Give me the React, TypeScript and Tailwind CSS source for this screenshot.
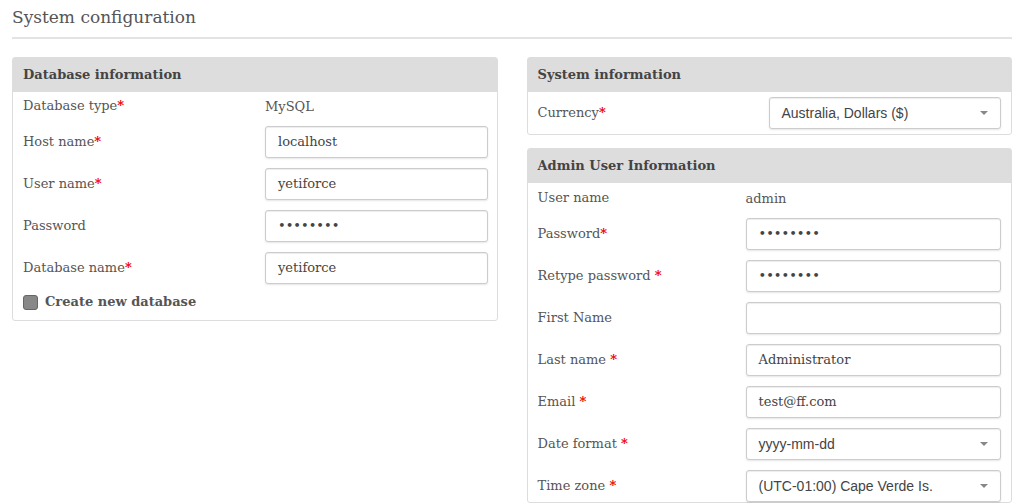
import React from "react";

const serif = { fontFamily: '"DejaVu Serif", serif' };
const sansF = { fontFamily: '"Liberation Sans", Arial, sans-serif', fontSize: "14px" };
const Star = () => <span className="text-[#e00] font-bold">*</span>;

function Inp({ v, sel }: { v: string; sel?: boolean }) {
  return (
    <div
      className="h-[32px] border border-[#ccc] rounded-[3px] shadow-[inset_0_1px_1px_rgba(0,0,0,0.075),0_1px_2px_rgba(0,0,0,0.1)] bg-white flex items-center px-3 text-[13px] text-[#444]"
      style={sel ? sansF : undefined}
    >
      <span className="flex-1 whitespace-nowrap">{v}</span>
      {sel && <span className="w-0 h-0 border-l-[4px] border-r-[4px] border-t-[4px] border-l-transparent border-r-transparent border-t-[#888]" />}
    </div>
  );
}

function Row({ label, req, sp, children, lw, h }: any) {
  return (
    <div className={`flex items-center ${h || ""}`}>
      <div className="text-[13px] text-[#555]" style={{ width: lw }}>
        {label}
        {req && (sp ? " " : "")}
        {req && <Star />}
      </div>
      <div className="flex-1">{children}</div>
    </div>
  );
}

function Panel({ title, children, cls }: any) {
  return (
    <div className={`border border-[#ddd] rounded-[3px] bg-white ${cls || ""}`}>
      <div className="h-[34px] bg-[#ddd] flex items-center px-[10px] text-[13px] font-bold text-[#444]">{title}</div>
      {children}
    </div>
  );
}

const Dots = "••••••••";

export default function App() {
  return (
    <div className="w-[1024px] h-[503px] bg-white overflow-hidden px-3" style={serif}>
      <div className="h-[39px] pt-[5px] text-[17px] text-[#555] border-b-2 border-[#e3e3e3]">System configuration</div>
      <div className="flex items-start gap-[29px] mt-[18px]">
        <Panel title="Database information" cls="w-[486px]">
          <div className="pl-[10px] pr-[9px] pb-[9px]">
            <Row label="Database type" req lw={242} h="h-[26px] mt-[1px]"><span className="text-[13px] text-[#555]">MySQL</span></Row>
            <div className="flex flex-col gap-[10px] mt-[7px]">
              <Row label="Host name" req lw={242}><Inp v="localhost" /></Row>
              <Row label="User name" req lw={242}><Inp v="yetiforce" /></Row>
              <Row label="Password" lw={242}><Inp v={Dots} /></Row>
              <Row label="Database name" req lw={242}><Inp v="yetiforce" /></Row>
            </div>
            <div className="flex items-center gap-[7px] mt-[9px] h-[18px]">
              <span className="w-[15px] h-[15px] rounded-[3px] bg-[#888] border border-[#666]" />
              <span className="text-[13px] font-bold text-[#555]">Create new database</span>
            </div>
          </div>
        </Panel>
        <div className="w-[486px] flex flex-col gap-[13px]">
          <Panel title="System information">
            <div className="px-[10px] py-[5px]">
              <Row label="Currency" req lw={231}><Inp v="Australia, Dollars ($)" sel /></Row>
            </div>
          </Panel>
          <Panel title="Admin User Information">
            <div className="px-[10px]">
              <Row label="User name" lw={208} h="h-[28px] mt-[1px]"><span className="text-[13px] text-[#555]">admin</span></Row>
              <div className="flex flex-col gap-[10px] mt-[6px]">
                <Row label="Password" req lw={208}><Inp v={Dots} /></Row>
                <Row label="Retype password" req sp lw={208}><Inp v={Dots} /></Row>
                <Row label="First Name" lw={208}><Inp v="" /></Row>
                <Row label="Last name" req sp lw={208}><Inp v="Administrator" /></Row>
                <Row label="Email" req sp lw={208}><Inp v="test@ff.com" /></Row>
                <Row label="Date format" req sp lw={208}><Inp v="yyyy-mm-dd" sel /></Row>
                <Row label="Time zone" req sp lw={208}><Inp v="(UTC-01:00) Cape Verde Is." sel /></Row>
              </div>
            </div>
          </Panel>
        </div>
      </div>
    </div>
  );
}
